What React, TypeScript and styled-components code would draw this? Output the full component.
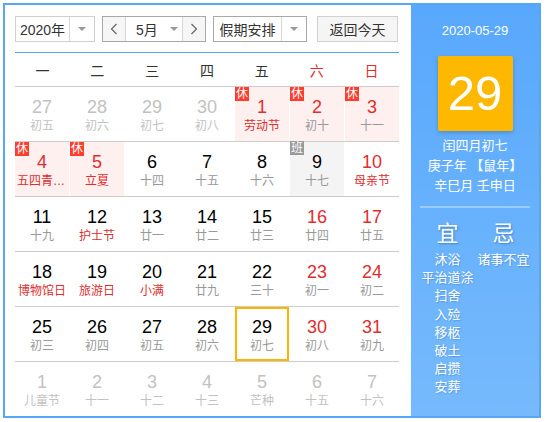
import React from "react";
import styled, { createGlobalStyle } from "styled-components";

const FONT = `"Liberation Sans", "Noto Sans CJK SC", sans-serif`;

const GlobalStyle = createGlobalStyle`
  html, body {
    margin: 0;
    padding: 0;
    background: #fff;
  }
  body {
    padding: 3px;
    font-family: ${FONT};
  }
`;

type Kind = "rest" | "work" | undefined;

interface Day {
  day: number;
  lunar: string;
  other?: boolean;
  red?: boolean;
  festival?: boolean;
  kind?: Kind;
  selected?: boolean;
}

const weeks: Day[][] = [
  [
    { day: 27, lunar: "初五", other: true },
    { day: 28, lunar: "初六", other: true },
    { day: 29, lunar: "初七", other: true },
    { day: 30, lunar: "初八", other: true },
    { day: 1, lunar: "劳动节", red: true, festival: true, kind: "rest" },
    { day: 2, lunar: "初十", red: true, kind: "rest" },
    { day: 3, lunar: "十一", red: true, kind: "rest" },
  ],
  [
    { day: 4, lunar: "五四青年节", red: true, festival: true, kind: "rest" },
    { day: 5, lunar: "立夏", red: true, festival: true, kind: "rest" },
    { day: 6, lunar: "十四" },
    { day: 7, lunar: "十五" },
    { day: 8, lunar: "十六" },
    { day: 9, lunar: "十七", kind: "work" },
    { day: 10, lunar: "母亲节", red: true, festival: true },
  ],
  [
    { day: 11, lunar: "十九" },
    { day: 12, lunar: "护士节", festival: true },
    { day: 13, lunar: "廿一" },
    { day: 14, lunar: "廿二" },
    { day: 15, lunar: "廿三" },
    { day: 16, lunar: "廿四", red: true },
    { day: 17, lunar: "廿五", red: true },
  ],
  [
    { day: 18, lunar: "博物馆日", festival: true },
    { day: 19, lunar: "旅游日", festival: true },
    { day: 20, lunar: "小满", festival: true },
    { day: 21, lunar: "廿九" },
    { day: 22, lunar: "三十" },
    { day: 23, lunar: "初一", red: true },
    { day: 24, lunar: "初二", red: true },
  ],
  [
    { day: 25, lunar: "初三" },
    { day: 26, lunar: "初四" },
    { day: 27, lunar: "初五" },
    { day: 28, lunar: "初六" },
    { day: 29, lunar: "初七", selected: true },
    { day: 30, lunar: "初八", red: true },
    { day: 31, lunar: "初九", red: true },
  ],
  [
    { day: 1, lunar: "儿童节", other: true },
    { day: 2, lunar: "十一", other: true },
    { day: 3, lunar: "十二", other: true },
    { day: 4, lunar: "十三", other: true },
    { day: 5, lunar: "芒种", other: true },
    { day: 6, lunar: "十五", other: true },
    { day: 7, lunar: "十六", other: true },
  ],
];

const weekdays = ["一", "二", "三", "四", "五", "六", "日"];
const yi = ["沐浴", "平治道涂", "扫舍", "入殓", "移柩", "破土", "启攒", "安葬"];
const ji = ["诸事不宜"];

const Frame = styled.div`
  width: 538px;
  height: 415px;
  box-sizing: border-box;
  border: 2px solid #58a6f6;
  display: flex;
  overflow: hidden;
`;

const Main = styled.div`
  width: 406px;
  box-sizing: border-box;
  padding: 11px 12px 0 10px;
  display: flex;
  flex-direction: column;
`;

const Toolbar = styled.div`
  display: flex;
  align-items: center;
  height: 26px;
  gap: 7px;
  padding-bottom: 10px;
  border-bottom: 1px solid #58a6f6;
`;

const Select = styled.div<{ $w: number; $dark?: boolean }>`
  width: ${(p) => p.$w}px;
  height: 26px;
  box-sizing: border-box;
  border: 1px solid ${(p) => (p.$dark ? "#a8a8a8" : "#cfcfcf")};
  display: flex;
  background: #fff;
  font-size: 14px;
  color: #333;
`;

const SelectText = styled.div`
  flex: 1;
  display: flex;
  align-items: center;
  justify-content: center;
  white-space: nowrap;
`;

const ArrowBox = styled.div<{ $divider?: boolean }>`
  width: 24px;
  display: flex;
  align-items: center;
  justify-content: center;
  border-left: ${(p) => (p.$divider ? "1px solid #d6d6d6" : "none")};
`;

const Triangle = styled.span`
  width: 0;
  height: 0;
  border-left: 4px solid transparent;
  border-right: 4px solid transparent;
  border-top: 4px solid #999;
`;

const MonthGroup = styled.div`
  width: 104px;
  height: 26px;
  box-sizing: border-box;
  border: 1px solid #a8a8a8;
  display: flex;
  font-size: 14px;
  color: #333;
  margin-left: 0;
`;

const NavBtn = styled.div<{ $side: "l" | "r" }>`
  width: 22px;
  display: flex;
  align-items: center;
  justify-content: center;
  background: #f6f6f6;
  ${(p) => (p.$side === "l" ? "border-right" : "border-left")}: 1px solid #d6d6d6;
  color: #666;
`;

const MonthSel = styled.div`
  flex: 1;
  display: flex;
  align-items: center;
  padding-left: 10px;
  gap: 12px;
`;

const TodayBtn = styled.div`
  margin-left: 3px;
  width: 81px;
  height: 26px;
  box-sizing: border-box;
  border: 1px solid #d0d0d0;
  background: #f5f5f5;
  display: flex;
  align-items: center;
  justify-content: center;
  font-size: 14px;
  color: #333;
`;

const WeekHeader = styled.div`
  display: grid;
  grid-template-columns: repeat(7, 1fr);
  height: 33px;
  border-bottom: 1px solid #cccccc;
`;

const WeekName = styled.div<{ $red?: boolean }>`
  display: flex;
  align-items: center;
  justify-content: center;
  font-size: 14px;
  color: ${(p) => (p.$red ? "#e02d2d" : "#333")};
`;

const Row = styled.div<{ $last?: boolean }>`
  display: grid;
  grid-template-columns: repeat(7, 1fr);
  column-gap: 1px;
  height: 54px;
  border-bottom: ${(p) => (p.$last ? "none" : "1px solid #cccccc")};
`;

const Cell = styled.div<{ $kind: Kind; $selected?: boolean }>`
  position: relative;
  box-sizing: border-box;
  display: flex;
  flex-direction: column;
  align-items: center;
  padding-top: ${(p) => (p.$selected ? 8 : 10)}px;
  background: ${(p) =>
    p.$kind === "rest" ? "#fff0f0" : p.$kind === "work" ? "#f4f4f4" : "#fff"};
  border: ${(p) => (p.$selected ? "2px solid #ffb400" : "none")};
`;

const Num = styled.div<{ $color: string }>`
  font-size: 18px;
  line-height: 20px;
  color: ${(p) => p.$color};
`;

const Lunar = styled.div<{ $color: string }>`
  margin-top: 1px;
  font-size: 12px;
  line-height: 16px;
  max-width: 50px;
  overflow: hidden;
  white-space: nowrap;
  text-overflow: ellipsis;
  color: ${(p) => p.$color};
`;

const Badge = styled.span<{ $kind: Kind }>`
  position: absolute;
  left: 0;
  top: ${(p) => (p.$kind === "work" ? -1 : 0)}px;
  width: 14px;
  height: 14px;
  line-height: 14px;
  font-size: 12px;
  text-align: center;
  color: #fff;
  background: ${(p) => (p.$kind === "work" ? "#999" : "#ff3c2e")};
`;

const Side = styled.div`
  flex: 1;
  background: linear-gradient(180deg, #58a8fd 0%, #76bafc 100%);
  color: #fff;
  display: flex;
  flex-direction: column;
  align-items: center;
  padding-top: 18px;
`;

const DateLine = styled.div`
  font-size: 13px;
  line-height: 16px;
`;

const BigDay = styled.div`
  margin-top: 17px;
  width: 75px;
  height: 75px;
  background: #ffb800;
  border-radius: 2px;
  box-shadow: 0 2px 4px rgba(0, 0, 0, 0.18);
  display: flex;
  align-items: center;
  justify-content: center;
  font-size: 49px;
  line-height: 1;
`;

const LunarInfo = styled.div`
  margin-top: 5px;
  font-size: 13px;
  line-height: 20px;
  text-align: center;
`;

const Divider = styled.div`
  margin-top: 10px;
  width: 110px;
  height: 2px;
  background: rgba(255, 255, 255, 0.35);
`;

const Almanac = styled.div`
  margin-top: 12px;
  display: grid;
  grid-template-columns: 56px 56px;
  justify-items: center;
  align-items: start;
  margin-left: 1px;
`;

const Column = styled.div`
  display: flex;
  flex-direction: column;
  align-items: center;
`;

const Head = styled.div`
  font-size: 22px;
  line-height: 28px;
  margin-bottom: 3px;
  text-shadow: 1px 1px 2px rgba(0, 40, 90, 0.35);
`;

const Item = styled.div`
  font-size: 13px;
  line-height: 18.2px;
  white-space: nowrap;
  text-shadow: 1px 1px 1px rgba(0, 40, 90, 0.2);
`;

function numColor(d: Day) {
  if (d.other) return "#c2c2c2";
  if (d.red) return "#e02d2d";
  return "#000";
}

function lunarColor(d: Day) {
  if (d.other) return "#c2c2c2";
  if (d.festival) return "#e02d2d";
  return "#999";
}

const Chevron: React.FC<{ dir: "l" | "r" }> = ({ dir }) => (
  <svg width="8" height="12" viewBox="0 0 8 12">
    <path
      d={dir === "l" ? "M6.5 1 L1.5 6 L6.5 11" : "M1.5 1 L6.5 6 L1.5 11"}
      fill="none"
      stroke="#666"
      strokeWidth="1.2"
    />
  </svg>
);

export default function App() {
  return (
    <>
      <GlobalStyle />
      <Frame>
        <Main>
          <Toolbar>
            <Select $w={80}>
              <SelectText>2020年</SelectText>
              <ArrowBox $divider>
                <Triangle />
              </ArrowBox>
            </Select>
            <MonthGroup>
              <NavBtn $side="l">
                <Chevron dir="l" />
              </NavBtn>
              <MonthSel>
                <span>5月</span>
                <Triangle />
              </MonthSel>
              <NavBtn $side="r">
                <Chevron dir="r" />
              </NavBtn>
            </MonthGroup>
            <Select $w={94} $dark>
              <SelectText>假期安排</SelectText>
              <ArrowBox $divider>
                <Triangle />
              </ArrowBox>
            </Select>
            <TodayBtn>返回今天</TodayBtn>
          </Toolbar>
          <WeekHeader>
            {weekdays.map((w, i) => (
              <WeekName key={w} $red={i >= 5}>
                {w}
              </WeekName>
            ))}
          </WeekHeader>
          {weeks.map((week, wi) => (
            <Row key={wi} $last={wi === weeks.length - 1}>
              {week.map((d, di) => (
                <Cell key={di} $kind={d.kind} $selected={d.selected}>
                  {d.kind && (
                    <Badge $kind={d.kind}>{d.kind === "rest" ? "休" : "班"}</Badge>
                  )}
                  <Num $color={numColor(d)}>{d.day}</Num>
                  <Lunar $color={lunarColor(d)}>{d.lunar}</Lunar>
                </Cell>
              ))}
            </Row>
          ))}
        </Main>
        <Side>
          <DateLine>2020-05-29</DateLine>
          <BigDay>29</BigDay>
          <LunarInfo>
            闰四月初七
            <br />
            庚子年 【鼠年】
            <br />
            辛巳月 壬申日
          </LunarInfo>
          <Divider />
          <Almanac>
            <Column>
              <Head>宜</Head>
              {yi.map((t) => (
                <Item key={t}>{t}</Item>
              ))}
            </Column>
            <Column>
              <Head>忌</Head>
              {ji.map((t) => (
                <Item key={t}>{t}</Item>
              ))}
            </Column>
          </Almanac>
        </Side>
      </Frame>
    </>
  );
}
